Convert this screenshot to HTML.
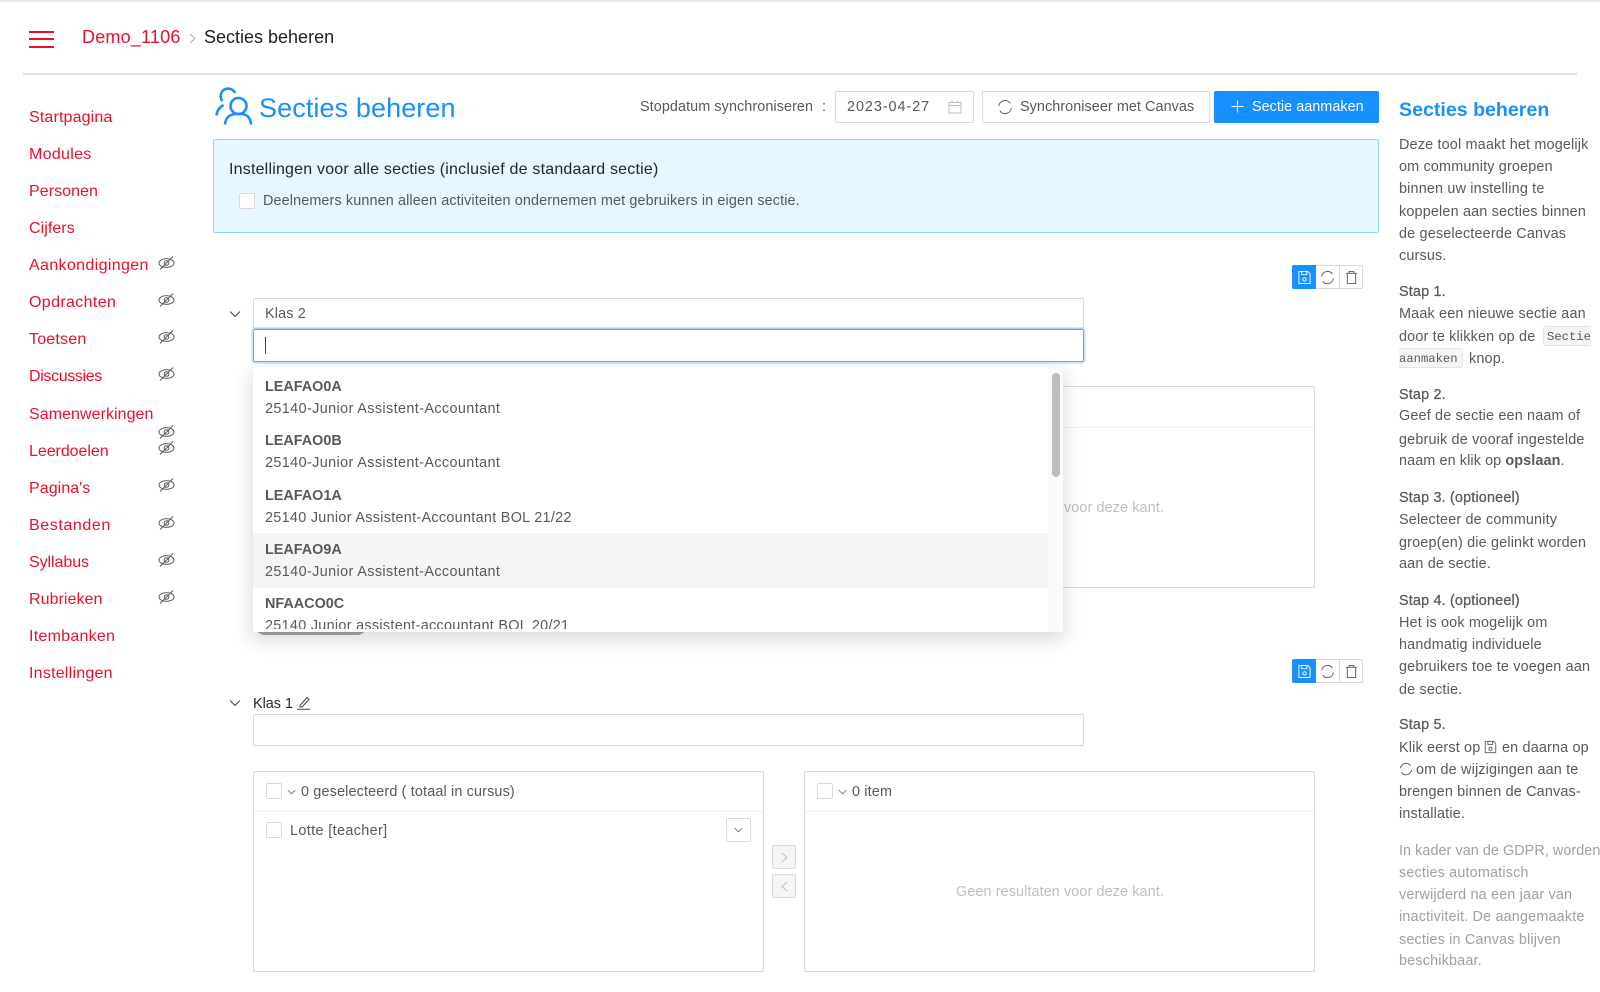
<!DOCTYPE html>
<html lang="nl">
<head>
<meta charset="utf-8">
<title>Secties beheren</title>
<style>
html,body{margin:0;padding:0;background:#fff}
body{width:1600px;height:992px;position:relative;overflow:hidden;font-family:"Liberation Sans",sans-serif;color:#595959;filter:blur(.3px)}
.t{position:absolute;white-space:nowrap;line-height:20px;height:20px}
.b{position:absolute;box-sizing:border-box;border:1px solid #d9d9d9;border-radius:2px;background:#fff}
.s{font-size:16px;left:29px;letter-spacing:.06px;color:#e8112d;margin-top:1px}
.h{left:1399px;font-size:14.4px;letter-spacing:.17px;color:#595959;margin-top:1px}
.st{-webkit-text-stroke:.25px #595959}
.g{color:#a0a0a0}
.c{position:absolute;box-sizing:border-box;width:16px;height:16px;border:1px solid #d9d9d9;border-radius:2px;background:#fff}
.i{position:absolute;overflow:visible;fill:none;stroke:#595959;stroke-width:1}
.rt{font-size:14.4px;letter-spacing:.39px;color:#595959;margin-top:1px}
.rb{font-size:14.4px;font-weight:bold;letter-spacing:0;color:#595959;margin-top:1px}
</style>
</head>
<body>
<svg width="0" height="0" style="position:absolute">
<defs>
<symbol id="eye" viewBox="0 0 17 14"><ellipse cx="8.5" cy="7" rx="7.5" ry="4.4"/><circle cx="8.5" cy="7" r="2.3"/><path d="M2 13.5L15 .5"/></symbol>
<symbol id="sync" viewBox="0 0 16 16"><path d="M1.800 7A6.300 6.300 0 0 1 13.200 4.200M14.300 9A6.300 6.300 0 0 1 2.800 11.800"/></symbol>
<symbol id="save" viewBox="0 0 14 16"><path d="M1 1.500H10.500L13 4V14.500H1ZM4 1.500V5H9.500V1.500"/><circle cx="7" cy="10" r="1.800"/></symbol>
<symbol id="trash" viewBox="0 0 14 16"><path d="M1 3.500H13M4.500 3.500V1.500H9.500V3.500M2.500 3.500V14.500H11.500V3.500"/></symbol>
<symbol id="chev" viewBox="0 0 12 8"><path d="M1 1.500L6 6.500L11 1.500"/></symbol>
</defs>
</svg>

<div style="position:absolute;left:0;top:0;width:1600px;height:2px;background:#e4e6e8"></div>
<div style="position:absolute;left:29px;top:31px;width:25px;height:2px;background:#e8112d"></div>
<div style="position:absolute;left:29px;top:38px;width:25px;height:2px;background:#e8112d"></div>
<div style="position:absolute;left:29px;top:46px;width:25px;height:2px;background:#e8112d"></div>
<div class="t" style="left:82px;top:27px;font-size:18px;color:#e8112d;letter-spacing:.2px">Demo_1106</div>
<svg class="i" style="left:189px;top:33px;stroke:#aaa" width="7" height="11" viewBox="0 0 7 11"><path d="M1 1L6 5.500L1 10"/></svg>
<div class="t" style="left:204px;top:27px;font-size:18px;color:#1f1f1f;letter-spacing:0">Secties beheren</div>
<div style="position:absolute;left:23px;top:73px;width:1554px;height:2px;background:#dcdee0"></div>

<div class="t s" style="top:107px;letter-spacing:.15px">Startpagina</div>
<div class="t s" style="top:144px;letter-spacing:.3px">Modules</div>
<div class="t s" style="top:181px">Personen</div>
<div class="t s" style="top:218px">Cijfers</div>
<div class="t s" style="top:255px;letter-spacing:.36px">Aankondigingen</div>
<div class="t s" style="top:292px;letter-spacing:.36px">Opdrachten</div>
<div class="t s" style="top:329px;letter-spacing:.2px">Toetsen</div>
<div class="t s" style="top:366px;letter-spacing:-.35px">Discussies</div>
<div class="t s" style="top:404px">Samenwerkingen</div>
<div class="t s" style="top:441px;letter-spacing:-.05px">Leerdoelen</div>
<div class="t s" style="top:478px">Pagina's</div>
<div class="t s" style="top:515px;letter-spacing:.6px">Bestanden</div>
<div class="t s" style="top:552px;letter-spacing:-.06px">Syllabus</div>
<div class="t s" style="top:589px">Rubrieken</div>
<div class="t s" style="top:626px;letter-spacing:.26px">Itembanken</div>
<div class="t s" style="top:663px;letter-spacing:.24px">Instellingen</div>

<svg class="i" style="left:158px;top:256px" width="17" height="14"><use href="#eye"/></svg>
<svg class="i" style="left:158px;top:293px" width="17" height="14"><use href="#eye"/></svg>
<svg class="i" style="left:158px;top:330px" width="17" height="14"><use href="#eye"/></svg>
<svg class="i" style="left:158px;top:367px" width="17" height="14"><use href="#eye"/></svg>
<svg class="i" style="left:158px;top:425px" width="17" height="14"><use href="#eye"/></svg>
<svg class="i" style="left:158px;top:441px" width="17" height="14"><use href="#eye"/></svg>
<svg class="i" style="left:158px;top:478px" width="17" height="14"><use href="#eye"/></svg>
<svg class="i" style="left:158px;top:516px" width="17" height="14"><use href="#eye"/></svg>
<svg class="i" style="left:158px;top:553px" width="17" height="14"><use href="#eye"/></svg>
<svg class="i" style="left:158px;top:590px" width="17" height="14"><use href="#eye"/></svg>

<svg class="i" style="left:215px;top:88px;stroke:#1890ff;stroke-width:2.6" width="37" height="37" viewBox="0 0 37 37">
<circle cx="23.500" cy="18" r="8"/>
<path d="M10 36.500C10.500 29 15 25.800 23.500 25.800S35.500 29 36 36.500"/>
<path d="M7.500 13A7.500 7.500 0 1 1 20 5M1.500 27.500C2 22 5 19 8.500 17"/>
</svg>
<div class="t" style="left:259px;top:92px;height:32px;line-height:32px;font-size:27px;color:#1890ff;letter-spacing:.1px">Secties beheren</div>

<div class="t" style="left:640px;top:97px;font-size:14.4px;letter-spacing:.08px;color:#595959">Stopdatum synchroniseren</div>
<div class="t" style="left:822px;top:97px;font-size:14.4px">:</div>
<div class="b" style="left:835px;top:91px;width:139px;height:32px"></div>
<div class="t" style="left:847px;top:97px;font-size:14.4px;letter-spacing:.95px;color:#595959">2023-04-27</div>
<svg class="i" style="left:948px;top:100px;stroke:#bfbfbf" width="14" height="14" viewBox="0 0 14 14"><path d="M1 2.500H13V13H1ZM1 5.500H13M4 .5V3M10 .5V3"/></svg>
<div class="b" style="left:982px;top:91px;width:228px;height:32px"></div>
<svg class="i" style="left:997px;top:99px" width="16" height="16"><use href="#sync"/></svg>
<div class="t" style="left:1020px;top:97px;font-size:14.4px;letter-spacing:.06px;color:#595959">Synchroniseer met Canvas</div>
<div style="position:absolute;left:1214px;top:91px;width:165px;height:32px;background:#1890ff;border-radius:2px;box-shadow:0 2px 0 rgba(0,0,0,.045)"></div>
<svg class="i" style="left:1231px;top:100px;stroke:#fff" width="13" height="13" viewBox="0 0 13 13"><path d="M6.500 .5V12.500M.5 6.500H12.500"/></svg>
<div class="t" style="left:1252px;top:97px;font-size:14.4px;letter-spacing:.03px;color:#fff">Sectie aanmaken</div>

<div style="position:absolute;left:213px;top:139px;width:1166px;height:94px;box-sizing:border-box;background:#e6f7ff;border:1px solid #91d5ff;border-radius:2px"></div>
<div class="t" style="left:229px;top:160px;font-size:16px;color:#262626;letter-spacing:.2px">Instellingen voor alle secties (inclusief de standaard sectie)</div>
<div class="c" style="left:239px;top:193px"></div>
<div class="t" style="left:263px;top:191px;font-size:14.4px;letter-spacing:.12px;color:#595959">Deelnemers kunnen alleen activiteiten ondernemen met gebruikers in eigen sectie.</div>

<!-- section 1 toolbar -->
<div style="position:absolute;left:1292px;top:265px;width:24px;height:24px;background:#1890ff;border-radius:2px 0 0 2px"></div>
<div class="b" style="left:1316px;top:265px;width:24px;height:24px;border-radius:0;border-left:0"></div>
<div class="b" style="left:1339px;top:265px;width:24px;height:24px;border-radius:0 2px 2px 0"></div>
<svg class="i" style="left:1298px;top:270px;stroke:#fff" width="13" height="15" viewBox="0 0 14 16"><use href="#save" width="14" height="16"/></svg>
<svg class="i" style="left:1320px;top:270px" width="15" height="15" viewBox="0 0 16 16"><use href="#sync" width="16" height="16"/></svg>
<svg class="i" style="left:1345px;top:270px" width="13" height="15" viewBox="0 0 14 16"><use href="#trash" width="14" height="16"/></svg>

<svg class="i" style="left:229px;top:310px;stroke:#444" width="12" height="8"><use href="#chev"/></svg>
<div class="b" style="left:253px;top:298px;width:831px;height:31px"></div>
<div class="t" style="left:265px;top:304px;font-size:14.4px;letter-spacing:.15px;color:#595959">Klas 2</div>
<div class="b" style="left:253px;top:329px;width:831px;height:33px;border-color:#5aa9f6;box-shadow:0 0 0 2px rgba(24,144,255,.2)"></div>
<div style="position:absolute;left:265px;top:337px;width:1px;height:17px;background:#444"></div>

<!-- section 1 boxes (under dropdown) -->
<div class="b" style="left:253px;top:386px;width:510px;height:202px"></div>
<div class="b" style="left:804px;top:386px;width:511px;height:202px"></div>
<div style="position:absolute;left:805px;top:427px;width:509px;height:1px;background:#f0f0f0"></div>
<div class="t" style="left:956px;top:498px;font-size:14.4px;letter-spacing:.1px;color:#bfbfbf">Geen resultaten voor deze kant.</div>
<div style="position:absolute;left:255px;top:615px;width:112px;height:20px;border-radius:10px;background:#a6a6a6"></div>

<!-- dropdown -->
<div style="position:absolute;left:253px;top:367px;width:810px;height:265px;background:#fff;box-shadow:0 6px 18px 2px rgba(0,0,0,.14);overflow:hidden">
<div style="position:absolute;left:0;top:166px;width:795px;height:55px;background:#f5f5f5"></div>
<div style="position:absolute;left:795px;top:0;width:16px;height:265px;background:#fafafa"></div>
<div style="position:absolute;left:799px;top:6px;width:8px;height:104px;border-radius:4px;background:#bdbdbd"></div>
<div style="position:absolute;left:0;top:0;width:811px;height:262px;overflow:hidden">
<div class="t rb" style="left:12px;top:9px">LEAFAO0A</div>
<div class="t rt" style="left:12px;top:31px">25140-Junior Assistent-Accountant</div>
<div class="t rb" style="left:12px;top:63px">LEAFAO0B</div>
<div class="t rt" style="left:12px;top:85px">25140-Junior Assistent-Accountant</div>
<div class="t rb" style="left:12px;top:118px">LEAFAO1A</div>
<div class="t rt" style="left:12px;top:140px;letter-spacing:.3px">25140 Junior Assistent-Accountant BOL 21/22</div>
<div class="t rb" style="left:12px;top:172px">LEAFAO9A</div>
<div class="t rt" style="left:12px;top:194px">25140-Junior Assistent-Accountant</div>
<div class="t rb" style="left:12px;top:226px">NFAACO0C</div>
<div class="t rt" style="left:12px;top:248px;letter-spacing:.3px">25140 Junior assistent-accountant BOL 20/21</div>
</div>
</div>

<!-- section 2 toolbar -->
<div style="position:absolute;left:1292px;top:659px;width:24px;height:24px;background:#1890ff;border-radius:2px 0 0 2px"></div>
<div class="b" style="left:1316px;top:659px;width:24px;height:24px;border-radius:0;border-left:0"></div>
<div class="b" style="left:1339px;top:659px;width:24px;height:24px;border-radius:0 2px 2px 0"></div>
<svg class="i" style="left:1298px;top:664px;stroke:#fff" width="13" height="15" viewBox="0 0 14 16"><use href="#save" width="14" height="16"/></svg>
<svg class="i" style="left:1320px;top:664px" width="15" height="15" viewBox="0 0 16 16"><use href="#sync" width="16" height="16"/></svg>
<svg class="i" style="left:1345px;top:664px" width="13" height="15" viewBox="0 0 14 16"><use href="#trash" width="14" height="16"/></svg>

<svg class="i" style="left:229px;top:699px;stroke:#444" width="12" height="8"><use href="#chev"/></svg>
<div class="t" style="left:253px;top:694px;font-size:14.4px;letter-spacing:0;color:#262626">Klas 1</div>
<svg class="i" style="left:297px;top:696px;stroke:#444" width="13" height="14" viewBox="0 0 13 14"><path d="M3 9.500L10 1.500L12 3.500L5 11H3ZM0 13.300H13"/></svg>
<div class="b" style="left:253px;top:714px;width:831px;height:32px"></div>

<div class="b" style="left:253px;top:771px;width:511px;height:201px"></div>
<div style="position:absolute;left:254px;top:811px;width:509px;height:1px;background:#f0f0f0"></div>
<div class="c" style="left:266px;top:783px"></div>
<svg class="i" style="left:287px;top:789px" width="9" height="6" viewBox="0 0 12 8"><use href="#chev" width="12" height="8"/></svg>
<div class="t" style="left:301px;top:782px;font-size:14.4px;letter-spacing:.15px;color:#595959">0 geselecteerd ( totaal in cursus)</div>
<div class="c" style="left:266px;top:822px"></div>
<div class="t" style="left:290px;top:821px;font-size:14.4px;letter-spacing:.37px;color:#595959">Lotte [teacher]</div>
<div class="b" style="left:726px;top:818px;width:25px;height:24px"></div>
<svg class="i" style="left:734px;top:827px" width="9" height="6" viewBox="0 0 12 8"><use href="#chev" width="12" height="8"/></svg>

<div class="b" style="left:772px;top:845px;width:24px;height:24px;background:#f5f5f5"></div>
<div class="b" style="left:772px;top:874px;width:24px;height:24px;background:#f5f5f5"></div>
<svg class="i" style="left:781px;top:852px;stroke:#bfbfbf" width="7" height="11" viewBox="0 0 7 11"><path d="M1 1L6 5.500L1 10"/></svg>
<svg class="i" style="left:781px;top:881px;stroke:#bfbfbf" width="7" height="11" viewBox="0 0 7 11"><path d="M6 1L1 5.500L6 10"/></svg>

<div class="b" style="left:804px;top:771px;width:511px;height:201px"></div>
<div style="position:absolute;left:805px;top:811px;width:509px;height:1px;background:#f0f0f0"></div>
<div class="c" style="left:817px;top:783px"></div>
<svg class="i" style="left:838px;top:789px" width="9" height="6" viewBox="0 0 12 8"><use href="#chev" width="12" height="8"/></svg>
<div class="t" style="left:852px;top:782px;font-size:14.4px;letter-spacing:.15px;color:#595959">0 item</div>
<div class="t" style="left:956px;top:882px;font-size:14.4px;letter-spacing:.1px;color:#bfbfbf">Geen resultaten voor deze kant.</div>

<!-- help -->
<div class="t" style="left:1399px;top:100px;font-size:19.6px;font-weight:bold;color:#1890ff">Secties beheren</div>
<div class="t h" style="top:134px">Deze tool maakt het mogelijk</div>
<div class="t h" style="top:156px">om community groepen</div>
<div class="t h" style="top:178px">binnen uw instelling te</div>
<div class="t h" style="top:201px">koppelen aan secties binnen</div>
<div class="t h" style="top:223px">de geselecteerde Canvas</div>
<div class="t h" style="top:245px">cursus.</div>
<div class="t h st" style="top:281px">Stap 1.</div>
<div class="t h" style="top:303px">Maak een nieuwe sectie aan</div>
<div class="t h" style="top:326px">door te klikken op de</div>
<div style="position:absolute;left:1543px;top:326px;width:48px;height:20px;box-sizing:border-box;background:#f5f5f5;border:1px solid #e4e4e4;border-right:0;border-radius:3px 0 0 3px;overflow:hidden"></div>
<div class="t" style="left:1547px;top:327px;font-family:'Liberation Mono',monospace;font-size:12.2px;color:#595959;width:44px;overflow:hidden">Sectie</div>
<div style="position:absolute;left:1399px;top:348px;width:64px;height:20px;box-sizing:border-box;background:#f5f5f5;border:1px solid #e4e4e4;border-left:0;border-radius:0 3px 3px 0"></div>
<div class="t" style="left:1399px;top:349px;font-family:'Liberation Mono',monospace;font-size:12.2px;color:#595959">aanmaken</div>
<div class="t h" style="left:1469px;top:348px">knop.</div>
<div class="t h st" style="top:384px">Stap 2.</div>
<div class="t h" style="top:405px">Geef de sectie een naam of</div>
<div class="t h" style="top:429px">gebruik de vooraf ingestelde</div>
<div class="t h" style="top:450px;letter-spacing:.1px">naam en klik op <b>opslaan</b>.</div>
<div class="t h st" style="top:487px">Stap 3. (optioneel)</div>
<div class="t h" style="top:509px">Selecteer de community</div>
<div class="t h" style="top:532px">groep(en) die gelinkt worden</div>
<div class="t h" style="top:553px">aan de sectie.</div>
<div class="t h st" style="top:590px">Stap 4. (optioneel)</div>
<div class="t h" style="top:612px">Het is ook mogelijk om</div>
<div class="t h" style="top:634px">handmatig individuele</div>
<div class="t h" style="top:656px">gebruikers toe te voegen aan</div>
<div class="t h" style="top:679px">de sectie.</div>
<div class="t h st" style="top:714px">Stap 5.</div>
<div class="t h" style="top:737px">Klik eerst op</div>
<svg class="i" style="left:1484px;top:740px;stroke:#595959" width="13" height="14" viewBox="0 0 14 16"><use href="#save" width="14" height="16"/></svg>
<div class="t h" style="left:1502px;top:737px">en daarna op</div>
<svg class="i" style="left:1399px;top:762px;stroke:#444" width="14" height="14" viewBox="0 0 16 16"><use href="#sync" width="16" height="16"/></svg>
<div class="t h" style="left:1416px;top:759px">om de wijzigingen aan te</div>
<div class="t h" style="top:781px">brengen binnen de Canvas-</div>
<div class="t h" style="top:803px">installatie.</div>
<div class="t h g" style="top:840px;letter-spacing:.05px">In kader van de GDPR, worden</div>
<div class="t h g" style="top:862px">secties automatisch</div>
<div class="t h g" style="top:884px">verwijderd na een jaar van</div>
<div class="t h g" style="top:906px">inactiviteit. De aangemaakte</div>
<div class="t h g" style="top:929px">secties in Canvas blijven</div>
<div class="t h g" style="top:950px">beschikbaar.</div>
</body>
</html>
